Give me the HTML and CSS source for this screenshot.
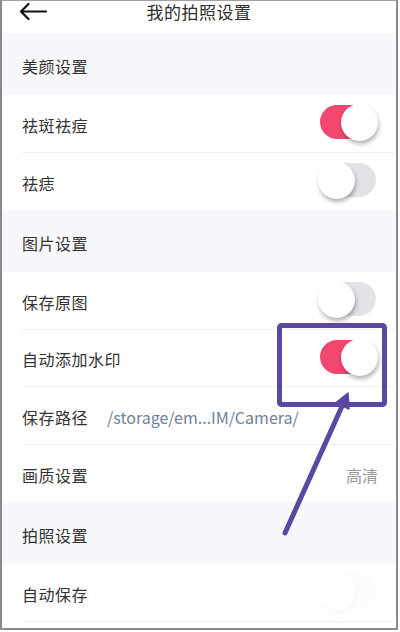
FILE: index.html
```html
<!DOCTYPE html>
<html lang="zh">
<head>
<meta charset="utf-8">
<title>我的拍照设置</title>
<link rel="stylesheet" href="styles.css">
</head>
<body>
<div class="screen">
  <header class="topbar">
    <div class="back">
      <svg width="30" height="20" viewBox="0 0 30 20"><path d="M28 9.5H3M10.5 2L3 9.5L10.5 17" fill="none" stroke="#111" stroke-width="2.2" stroke-linecap="round" stroke-linejoin="round"/></svg>
    </div>
    <div class="title">我的拍照设置</div>
    <div></div>
  </header>

  <div class="section">美颜设置</div>
  <div class="row"><div class="row-body"><span class="label">祛斑祛痘</span><span class="toggle on"><span class="knob"></span></span></div></div>
  <div class="row"><div class="row-body last"><span class="label">祛痣</span><span class="toggle"><span class="knob"></span></span></div></div>

  <div class="section">图片设置</div>
  <div class="row"><div class="row-body"><span class="label">保存原图</span><span class="toggle"><span class="knob"></span></span></div></div>
  <div class="row"><div class="row-body"><span class="label">自动添加水印</span><span class="toggle on"><span class="knob"></span></span></div></div>
  <div class="row"><div class="row-body start"><span class="label">保存路径</span><span class="path">/storage/em...IM/Camera/</span></div></div>
  <div class="row"><div class="row-body last"><span class="label">画质设置</span><span class="value">高清</span></div></div>

  <div class="section">拍照设置</div>
  <div class="row"><div class="row-body"><span class="label">自动保存</span><span class="toggle faint"><span class="knob"></span></span></div></div>

  <svg class="annot" width="400" height="632" viewBox="0 0 400 632">
    <rect x="279.5" y="325.5" width="105" height="79" rx="2" fill="none" stroke="#5b48a2" stroke-width="5"/>
    <line x1="285" y1="533" x2="343" y2="404" stroke="#5b48a2" stroke-width="5" stroke-linecap="round"/>
    <polygon points="348,393 335.5,403 349,409" fill="#5b48a2" stroke="#5b48a2" stroke-width="1.5" stroke-linejoin="round"/>
  </svg>
</div>
</body>
</html>
```
FILE: styles.css
```css
body {
  margin: 0;
  background: #fff;
  font-family: "Noto Sans CJK SC", "Noto Sans", sans-serif;
}

.screen {
  position: relative;
  width: 398px;
  height: 630px;
  box-sizing: border-box;
  border-left: 2px solid #8a8a8a;
  border-right: 2px solid #8a8a8a;
  border-bottom: 2px solid #8a8a8a;
  border-top: 1px solid #a0a0a0;
  background: #fff;
  overflow: hidden;
}

.topbar {
  height: 32px;
  display: grid;
  grid-template-columns: 1fr auto 1fr;
  align-items: start;
  background: #fff;
}

.back {
  padding-left: 16px;
  padding-top: 1px;
  height: 20px;
}

.back svg {
  display: block;
}

.title {
  font-size: 17px;
  line-height: 22px;
  color: #2e2e2e;
  letter-spacing: 0.5px;
}

.section {
  height: 62px;
  box-sizing: border-box;
  padding: 4px 0 0 20px;
  display: flex;
  align-items: center;
  background: #f8f7fb;
  font-size: 16px;
  color: #333;
  letter-spacing: 0.5px;
}

.row {
  height: 57.5px;
  padding-left: 20px;
  background: #fff;
}

.row-body {
  height: 100%;
  box-sizing: border-box;
  display: flex;
  align-items: center;
  justify-content: space-between;
  padding-right: 18px;
  padding-top: 3px;
  border-bottom: 1px solid #f1f0f4;
}

.row-body.last {
  border-bottom: none;
}

.row-body.start {
  justify-content: flex-start;
  gap: 19px;
}

.label {
  font-size: 16px;
  color: #333;
  letter-spacing: 0.5px;
}

.path {
  font-size: 16px;
  color: #6f809a;
}

.value {
  font-size: 16px;
  color: #9a9a9a;
}

.toggle {
  position: relative;
  width: 60px;
  height: 38px;
  margin-top: -3px;
}

.toggle::before {
  content: "";
  position: absolute;
  left: 2px;
  right: 2px;
  top: 1px;
  height: 34px;
  border-radius: 17px;
  background: #e3e2e7;
}

.toggle.on::before {
  background: #f2476f;
}

.knob {
  position: absolute;
  top: 0;
  left: 0;
  width: 37px;
  height: 37px;
  border-radius: 50%;
  background: #fff;
  box-shadow: 1px 3px 4px rgba(0, 0, 0, 0.3);
}

.toggle.on .knob {
  left: 23px;
}

.toggle.faint {
  opacity: 0.08;
}

.annot {
  position: absolute;
  left: -2px;
  top: -1px;
  pointer-events: none;
}
```
